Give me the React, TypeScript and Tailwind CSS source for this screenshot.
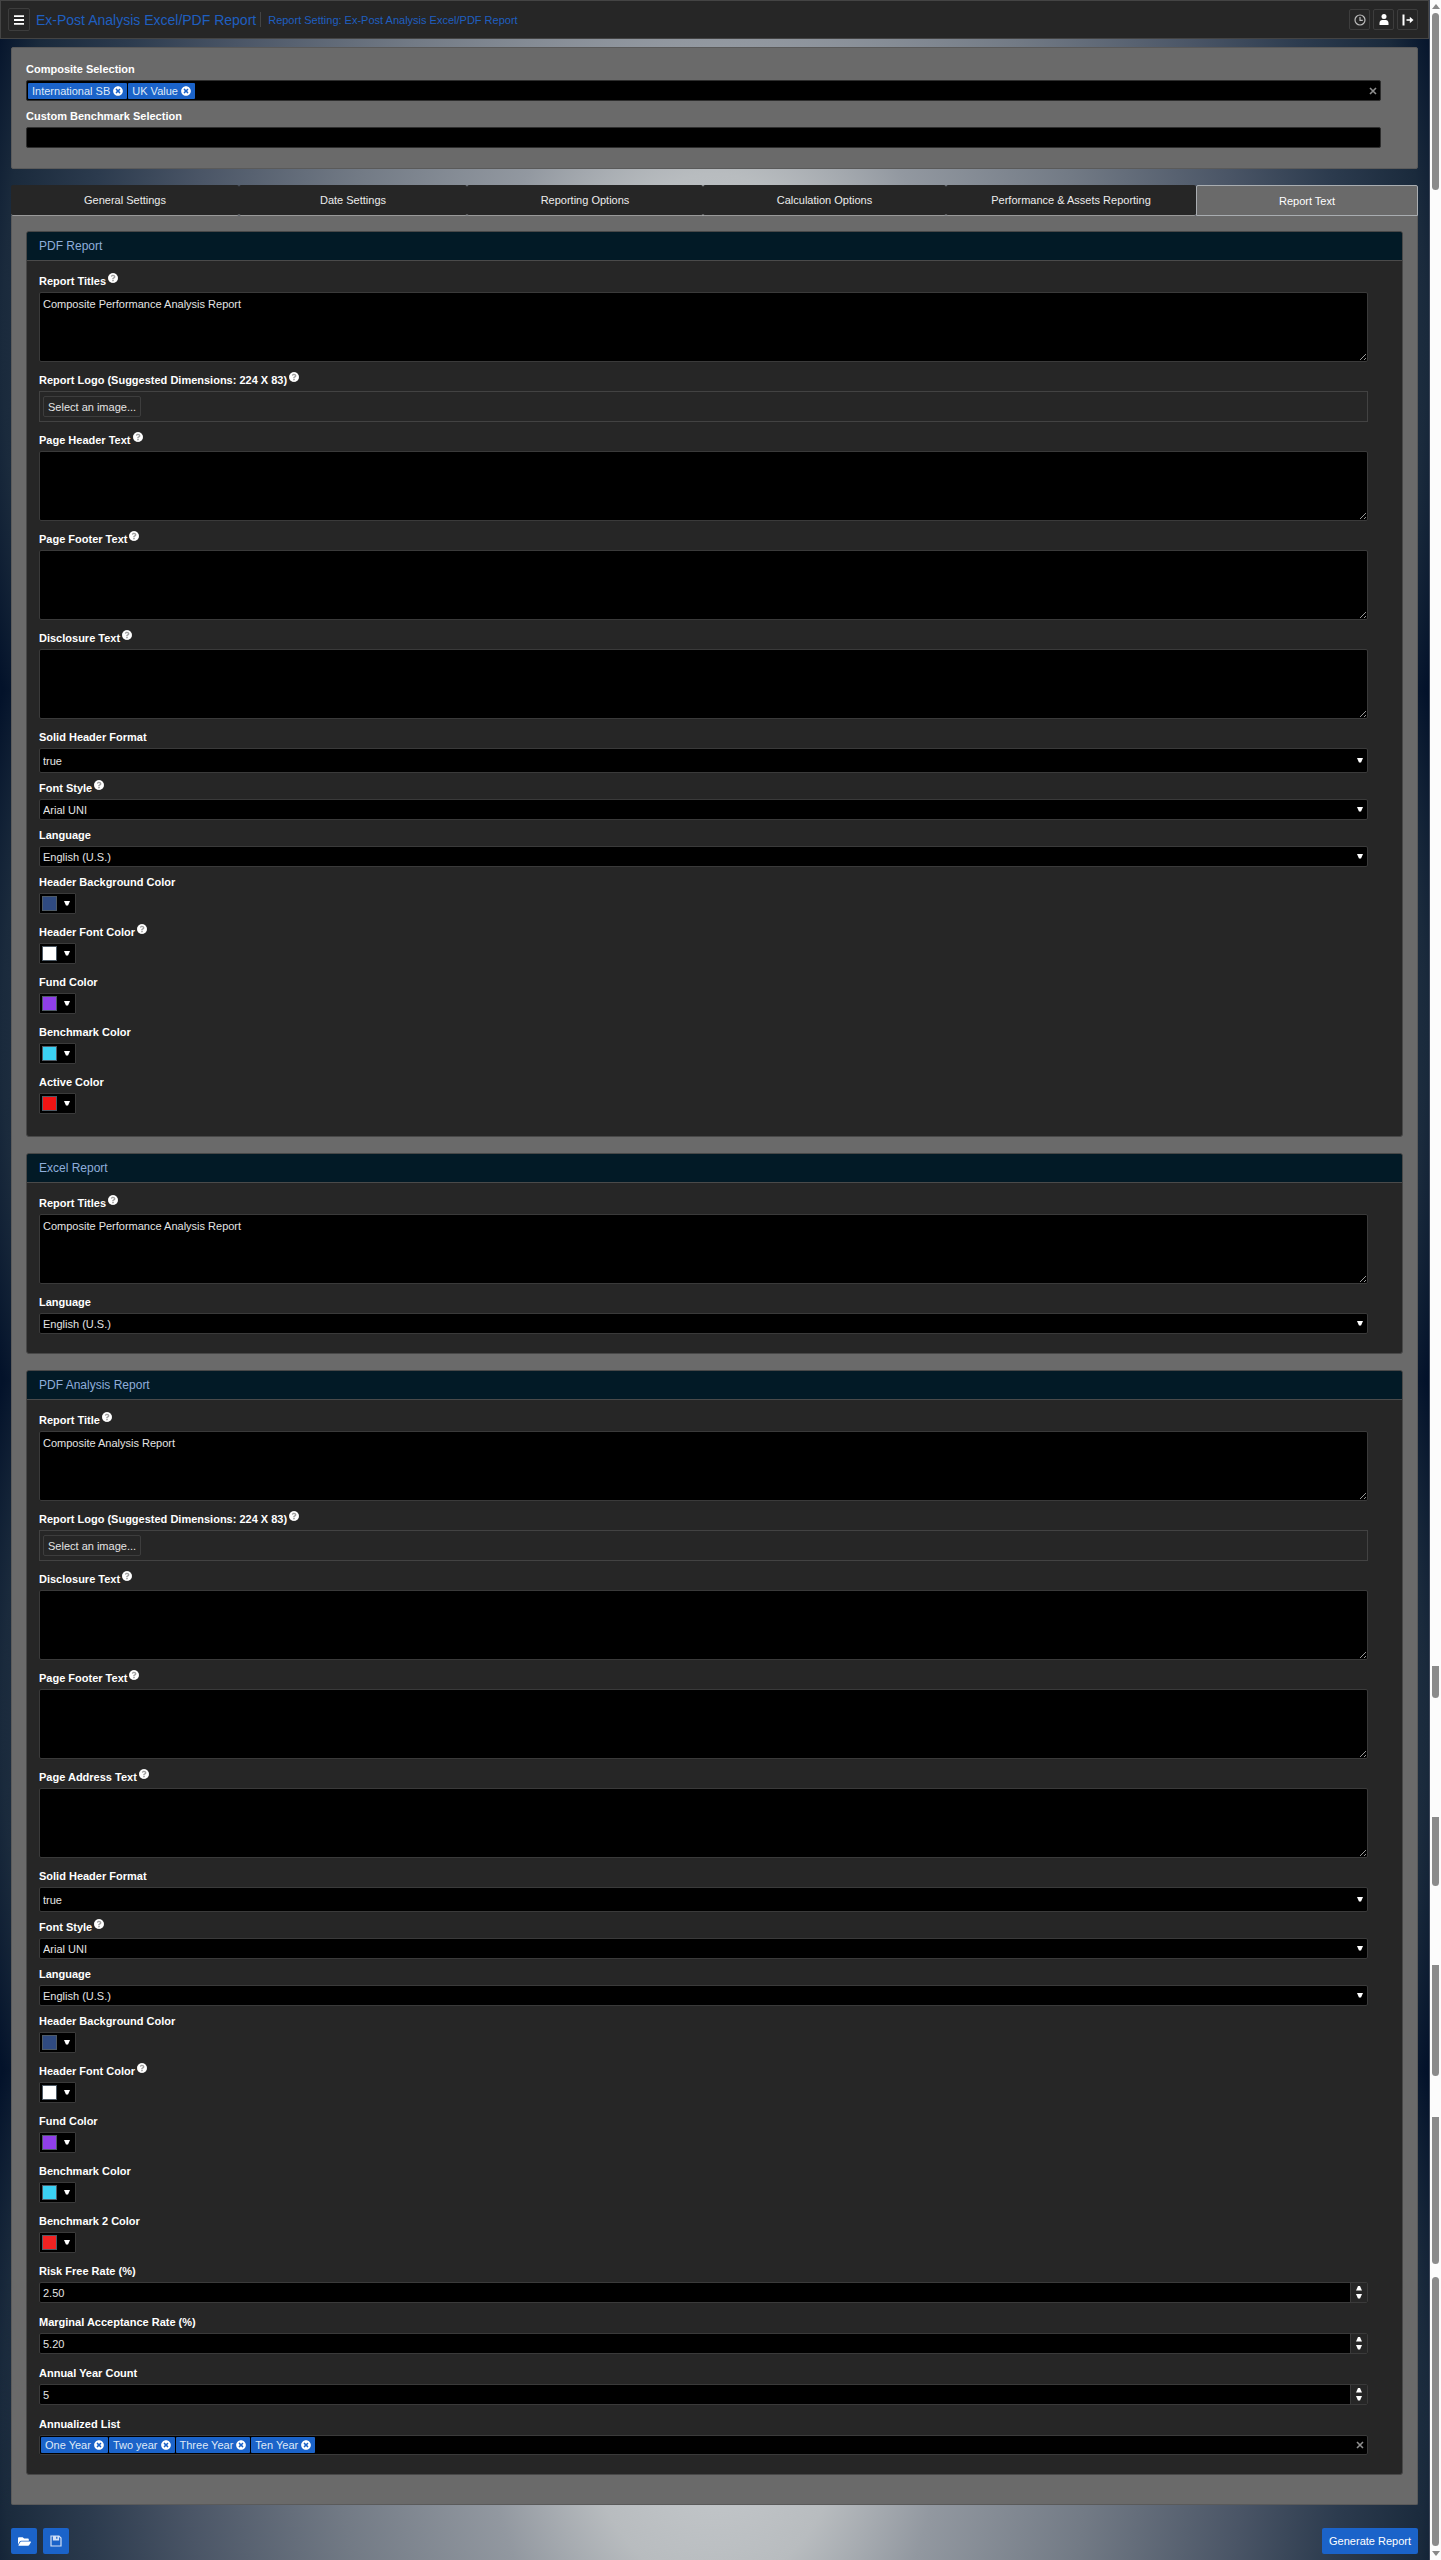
import React from "react";
import { FaQuestionCircle, FaTimesCircle, FaFolderOpen } from "react-icons/fa";

const DownArrow = ({ className = "" }: { className?: string }) => (
  <svg viewBox="0 0 6 5" className={`h-[5px] w-[6px] shrink-0 ${className}`} aria-hidden="true">
    <path d="M0 0h6L4 4.5H2z" fill="#fff" />
  </svg>
);

const UpArrow = () => (
  <svg viewBox="0 0 6 5" className="h-[5px] w-[6px]" aria-hidden="true">
    <path d="M0 4.5h6L4 0H2z" fill="#fff" />
  </svg>
);

const Cross = () => (
  <svg viewBox="0 0 8 8" className="h-2 w-2" aria-hidden="true">
    <path d="M1 1l6 6M7 1L1 7" stroke="#8f8f8f" strokeWidth="1.6" />
  </svg>
);

type FieldProps = { id: string; label: string; help?: boolean; gap?: string; children: React.ReactNode };

function Field({ id, label, help, gap = "mb-1", children }: FieldProps) {
  return (
    <div className={gap}>
      <div className="flex h-[22px] items-center gap-[2px]">
        <label htmlFor={id} className="font-bold text-white">
          {label}
        </label>
        {help && (
          <button type="button" aria-label={`Help: ${label}`} className="mb-[6px] rounded-full bg-neutral-400">
            <FaQuestionCircle className="size-[10px] text-white" />
          </button>
        )}
      </div>
      {children}
    </div>
  );
}

function TextArea({ id, label, value = "" }: { id: string; label: string; value?: string }) {
  return (
    <Field id={id} label={label} help gap="mb-[7px]">
      <textarea
        id={id}
        defaultValue={value}
        className="block h-[70px] w-full resize rounded-[2px] border border-[#3a3a3a] bg-black px-[3px] py-1 leading-[14px] text-[#e4e4e4] outline-none"
      />
    </Field>
  );
}

function FilePicker({ id }: { id: string }) {
  return (
    <Field id={id} label="Report Logo (Suggested Dimensions: 224 X 83)" help gap="mb-[7px]">
      <div className="flex h-[31px] items-center border border-[#424242] px-[3px]">
        <button id={id} type="button" className="h-[21px] rounded-[2px] border border-[#3d3d3d] px-1 text-[#e4e4e4]">
          Select an image...
        </button>
      </div>
    </Field>
  );
}

type SelectProps = { id: string; label: string; options: string[]; help?: boolean; tall?: boolean };

function Select({ id, label, options, help, tall }: SelectProps) {
  return (
    <Field id={id} label={label} help={help}>
      <div className="relative flex items-center">
        <select
          id={id}
          className={`w-full appearance-none rounded-[2px] border border-[#3a3a3a] bg-black px-[3px] text-[#e4e4e4] outline-none ${
            tall ? "h-[25px]" : "h-[21px]"
          }`}
        >
          {options.map((o) => (
            <option key={o}>{o}</option>
          ))}
        </select>
        <DownArrow className="pointer-events-none absolute right-[5px]" />
      </div>
    </Field>
  );
}

function ColorPicker({ id, label, color, help }: { id: string; label: string; color: string; help?: boolean }) {
  return (
    <Field id={id} label={label} help={help} gap="mb-[7px]">
      <button
        id={id}
        type="button"
        className="flex h-[21px] w-[37px] items-center justify-between rounded-[1px] border border-[#3a3a3a] bg-black pl-[2px] pr-[5px]"
      >
        <span className={`size-[15px] border border-[#4f5b66] ${color}`} />
        <DownArrow />
      </button>
    </Field>
  );
}

function NumberBox({ id, label, value }: { id: string; label: string; value: string }) {
  return (
    <Field id={id} label={label} gap="mb-2">
      <div className="flex h-[21px] rounded-[2px] border border-[#3a3a3a] bg-black">
        <input
          id={id}
          inputMode="decimal"
          defaultValue={value}
          className="min-w-0 flex-1 bg-transparent px-[3px] text-[#e4e4e4] outline-none"
        />
        <div className="flex w-[17px] flex-col items-center justify-evenly border-l border-[#3a3a3a] bg-[#262626]">
          <button type="button" aria-label={`Increase ${label}`}>
            <UpArrow />
          </button>
          <button type="button" aria-label={`Decrease ${label}`}>
            <DownArrow />
          </button>
        </div>
      </div>
    </Field>
  );
}

function TagBox({ id, tags, border }: { id: string; tags: string[]; border: string }) {
  return (
    <div className={`flex items-center gap-[1px] rounded-[2px] border bg-black pl-[1px] pr-[3px] ${border}`}>
      {tags.map((t) => (
        <span
          key={t}
          className="flex h-4 items-center gap-[3px] whitespace-nowrap rounded-[1px] bg-[#1b63c9] px-1 text-[#dfe9f7]"
        >
          {t}
          <button type="button" aria-label={`Remove ${t}`}>
            <FaTimesCircle className="size-[10px] text-white" />
          </button>
        </span>
      ))}
      <input id={id} className="h-full min-w-0 flex-1 bg-transparent text-white outline-none" />
      {tags.length > 0 && (
        <button type="button" aria-label="Clear selection">
          <Cross />
        </button>
      )}
    </div>
  );
}

function Section({ title, children }: { title: string; children: React.ReactNode }) {
  return (
    <section className="overflow-hidden rounded-[3px] border border-[#484848] bg-[#262626]">
      <h2 className="flex h-[29px] items-center border-b border-[#4a4a4a] bg-[#021a26] px-3 text-[12px] text-[#8faedb]">
        {title}
      </h2>
      <div className="pt-[9px] pr-[34px] pb-[15px] pl-3">{children}</div>
    </section>
  );
}

const tabs: [string, string][] = [
  ["General Settings", "flex-[228]"],
  ["Date Settings", "flex-[228]"],
  ["Reporting Options", "flex-[236]"],
  ["Calculation Options", "flex-[243]"],
  ["Performance & Assets Reporting", "flex-[250]"],
  ["Report Text", "flex-[220]"],
];

const languages = ["English (U.S.)"];
const iconButton = "flex size-[21px] items-center justify-center rounded-[2px] border border-[#3d3d3d]";
const blueButton = "flex h-[26px] items-center justify-center rounded-[2px] bg-[#1b63c9] text-white";

function Header() {
  return (
    <header className="flex h-[39px] items-center border border-[#444] bg-[#262626] pr-[10px] pl-[7px]">
      <button type="button" aria-label="Menu" className="flex h-[23px] w-[22px] items-center justify-center rounded-[2px] border border-[#3d3d3d]">
        <svg viewBox="0 0 10 10" className="size-[10px]" aria-hidden="true">
          <path d="M0 1.2h10M0 5h10M0 8.8h10" stroke="#fff" strokeWidth="1.8" />
        </svg>
      </button>
      <h1 className="ml-[6px] text-[14px] text-[#1f5fc0]">Ex-Post Analysis Excel/PDF Report</h1>
      <span className="ml-1 h-[15px] w-px bg-[#444]" />
      <span className="ml-[7px] text-[#1f5fc0]">Report Setting: Ex-Post Analysis Excel/PDF Report</span>
      <div className="ml-auto flex gap-[3px]">
        <button type="button" aria-label="History" className={iconButton}>
          <svg viewBox="0 0 12 12" className="size-3" fill="none" stroke="#bdbdbd" strokeWidth="1.2" aria-hidden="true">
            <circle cx="6" cy="6" r="5" />
            <path d="M6 3v3.3h2.8" />
          </svg>
        </button>
        <button type="button" aria-label="Account" className={iconButton}>
          <svg viewBox="0 0 10 11" className="h-[11px] w-[10px]" fill="#fff" aria-hidden="true">
            <circle cx="5" cy="2.6" r="2.5" />
            <path d="M.5 11V9c0-2 1.5-3 2.6-3h3.8c1.1 0 2.6 1 2.6 3v2z" />
          </svg>
        </button>
        <button type="button" aria-label="Sign out" className={iconButton}>
          <svg viewBox="0 0 12 12" className="size-3" fill="none" stroke="#fff" aria-hidden="true">
            <path d="M1.5 0.5v11" strokeWidth="2" />
            <path d="M4.5 6H9" strokeWidth="1.6" />
            <path d="M7.8 2.8L11.5 6 7.8 9.2z" fill="#fff" stroke="none" />
          </svg>
        </button>
      </div>
    </header>
  );
}

function ScrollTrack() {
  return (
    <div className="flex w-[11px] shrink-0 flex-col items-center bg-[#fcfcfc]" aria-hidden="true">
      <svg viewBox="0 0 8 5" className="mt-1 h-[5px] w-2">
        <path d="M4 0l4 5H0z" fill="#888" />
      </svg>
      <span className="mt-1 h-[177px] w-[7px] rounded-full bg-[#8b8b8b]" />
      <span className="mt-[1476px] h-8 w-[7px] rounded-b-full bg-[#8b8b8b]" />
      <span className="mt-[119px] h-[69px] w-[7px] rounded-b-full bg-[#8b8b8b]" />
      <span className="mt-[79px] h-[111px] w-[7px] rounded-b-full bg-[#8b8b8b]" />
      <span className="mt-[41px] h-[147px] w-[7px] rounded-b-full bg-[#8b8b8b]" />
      <span className="mt-[13px] h-[269px] w-[7px] rounded-full bg-[#8b8b8b]" />
      <svg viewBox="0 0 8 5" className="mt-[5px] h-[5px] w-2">
        <path d="M0 0h8L4 5z" fill="#888" />
      </svg>
    </div>
  );
}

export default function App() {
  return (
    <div className="flex bg-[#03122a] font-['Liberation_Sans',Arial,sans-serif] text-[11px] leading-[14px]">
      <div className="min-w-0 flex-1 border-r border-[#3c4658] bg-[radial-gradient(53%_146%_at_50%_50%,#c8cccf_0%,#b8bcbf_17%,#9298a0_30%,#727a85_50%,#4a5566_70%,#2c3b4e_83%,#1a2a3c_94%,#03122a_100%)] bg-[length:100%_690px]">
        <Header />
        <main className="px-[11px]">
          <div className="mt-2 rounded-[2px] border border-[#5a5a5a] bg-[#6a6a6a] pt-[10px] pr-9 pb-5 pl-[14px]">
            <Field id="composite" label="Composite Selection">
              <TagBox id="composite" tags={["International SB", "UK Value"]} border="h-[21px] border-[#2e2e2e]" />
            </Field>
            <Field id="custom-benchmark" label="Custom Benchmark Selection" gap="mb-0">
              <TagBox id="custom-benchmark" tags={[]} border="h-[21px] border-[#2e2e2e]" />
            </Field>
          </div>

          <div role="tablist" className="mt-4 flex">
            {tabs.map(([name, width], i) =>
              i === tabs.length - 1 ? (
                <button key={name} role="tab" aria-selected className={`h-[31px] rounded-t-[2px] border border-[#a9adb1] bg-[#6a6a6a] text-white ${width}`}>
                  {name}
                </button>
              ) : (
                <button key={name} role="tab" aria-selected={false} className={`h-[31px] rounded-[2px] border-b border-[#999] bg-[#262626] text-[#ececec] ${width}`}>
                  {name}
                </button>
              ),
            )}
          </div>

          <div role="tabpanel" className="flex flex-col gap-4 rounded-b-[2px] border border-t-0 border-[#5a5a5a] bg-[#6a6a6a] px-[14px] pt-[15px] pb-[29px]">
            <Section title="PDF Report">
              <TextArea id="pdf-titles" label="Report Titles" value="Composite Performance Analysis Report" />
              <FilePicker id="pdf-logo" />
              <TextArea id="pdf-header" label="Page Header Text" />
              <TextArea id="pdf-footer" label="Page Footer Text" />
              <TextArea id="pdf-disclosure" label="Disclosure Text" />
              <Select id="pdf-solid" label="Solid Header Format" options={["true", "false"]} tall />
              <Select id="pdf-font" label="Font Style" options={["Arial UNI"]} help />
              <Select id="pdf-language" label="Language" options={languages} />
              <ColorPicker id="pdf-header-bg" label="Header Background Color" color="bg-[#2f4a80]" />
              <ColorPicker id="pdf-header-font" label="Header Font Color" color="bg-white" help />
              <ColorPicker id="pdf-fund" label="Fund Color" color="bg-[#8f3fe8]" />
              <ColorPicker id="pdf-benchmark" label="Benchmark Color" color="bg-[#3bd0f2]" />
              <ColorPicker id="pdf-active" label="Active Color" color="bg-[#f01414]" />
            </Section>

            <Section title="Excel Report">
              <TextArea id="xls-titles" label="Report Titles" value="Composite Performance Analysis Report" />
              <Select id="xls-language" label="Language" options={languages} />
            </Section>

            <Section title="PDF Analysis Report">
              <TextArea id="an-title" label="Report Title" value="Composite Analysis Report" />
              <FilePicker id="an-logo" />
              <TextArea id="an-disclosure" label="Disclosure Text" />
              <TextArea id="an-footer" label="Page Footer Text" />
              <TextArea id="an-address" label="Page Address Text" />
              <Select id="an-solid" label="Solid Header Format" options={["true", "false"]} tall />
              <Select id="an-font" label="Font Style" options={["Arial UNI"]} help />
              <Select id="an-language" label="Language" options={languages} />
              <ColorPicker id="an-header-bg" label="Header Background Color" color="bg-[#2f4a80]" />
              <ColorPicker id="an-header-font" label="Header Font Color" color="bg-white" help />
              <ColorPicker id="an-fund" label="Fund Color" color="bg-[#8f3fe8]" />
              <ColorPicker id="an-benchmark" label="Benchmark Color" color="bg-[#3bd0f2]" />
              <ColorPicker id="an-benchmark-2" label="Benchmark 2 Color" color="bg-[#f02222]" />
              <NumberBox id="an-risk" label="Risk Free Rate (%)" value="2.50" />
              <NumberBox id="an-marginal" label="Marginal Acceptance Rate (%)" value="5.20" />
              <NumberBox id="an-years" label="Annual Year Count" value="5" />
              <Field id="an-list" label="Annualized List">
                <TagBox id="an-list" tags={["One Year", "Two year", "Three Year", "Ten Year"]} border="h-5 border-[#3a3a3a]" />
              </Field>
            </Section>
          </div>
        </main>

        <footer className="flex gap-[6px] px-[11px] pt-[23px] pb-[7px]">
          <button type="button" aria-label="Open" className={`w-[26px] ${blueButton}`}>
            <FaFolderOpen className="size-[13px]" />
          </button>
          <button type="button" aria-label="Save" className={`w-[26px] ${blueButton}`}>
            <svg viewBox="0 0 12 12" className="size-3" fill="none" stroke="#d3e0f5" strokeWidth="1.2" aria-hidden="true">
              <path d="M1 1h8l2 2v8H1z" />
              <path d="M3.5 1v4h5V1" fill="#d3e0f5" />
              <path d="M6.8 1.8v2" stroke="#1b63c9" />
            </svg>
          </button>
          <button type="button" className={`ml-auto px-[7px] ${blueButton}`}>
            Generate Report
          </button>
        </footer>
      </div>
      <ScrollTrack />
    </div>
  );
}
